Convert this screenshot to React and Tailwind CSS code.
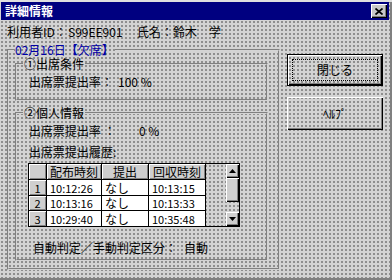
import React from "react";

const dots =
  "bg-[#d3d3d3] bg-[radial-gradient(circle,#8e8e8e_0.8px,transparent_1.1px)] bg-size-[4px_4px]";
const raised =
  "shadow-[inset_1px_1px_0_#fff,inset_-1px_-1px_0_#000,inset_-2px_-2px_0_#808080]";
const cellRaised = "bg-[#cfcfcf] shadow-[inset_1px_1px_0_#fff,inset_-1px_-1px_0_#808080]";
const groove = "border-2 [border-style:groove] border-[#d4d4d4] min-w-0 m-0 p-0";

const rows = [
  { no: "1", out: "10:12:26", sub: "なし", back: "10:13:15" },
  { no: "2", out: "10:13:16", sub: "なし", back: "10:13:33" },
  { no: "3", out: "10:29:40", sub: "なし", back: "10:35:48" },
];

function Arrow({ down }) {
  return (
    <svg width="7" height="4" viewBox="0 0 7 4">
      <polygon points={down ? "0,0 7,0 3.5,4" : "3.5,0 7,4 0,4"} fill="#000" />
    </svg>
  );
}

function HistoryGrid() {
  return (
    <div className="ml-[11px] mt-[4px] flex w-[212px] h-[64px] border border-black">
      <div className="grid grid-cols-[18px_55px_47px_57px_20px] grid-rows-[16px_16px_15px_15px]">
        <div className={`${cellRaised} border-r border-b border-black`} />
        <div className={`${cellRaised} border-r border-b border-black flex items-center justify-center`}>配布時刻</div>
        <div className={`${cellRaised} border-r border-b border-black flex items-center justify-center`}>提出</div>
        <div className={`${cellRaised} border-r border-b border-black flex items-center justify-center`}>回収時刻</div>
        <div />
        {rows.map((r, i) => (
          <React.Fragment key={r.no}>
            <div className={`${cellRaised} border-r border-black ${i < 2 ? "border-b" : ""} flex items-center justify-center text-[11px]`}>
              {r.no}
            </div>
            <div className={`bg-white border-r border-black ${i < 2 ? "border-b" : ""} pl-[3px] flex items-center text-[11px]`}>{r.out}</div>
            <div className={`bg-white border-r border-black ${i < 2 ? "border-b" : ""} pl-[3px] flex items-center`}>{r.sub}</div>
            <div className={`bg-white border-r border-black ${i < 2 ? "border-b" : ""} pl-[3px] flex items-center text-[11px]`}>{r.back}</div>
            <div />
          </React.Fragment>
        ))}
      </div>
      <div className="w-[13px] flex flex-col">
        <div className={`${raised} bg-[#cfcfcf] h-[14px] flex items-center justify-center`}>
          <Arrow />
        </div>
        <div className={`${raised} bg-[#cfcfcf] h-[24px]`} />
        <div className="h-[10px]" />
        <div className={`${raised} bg-[#cfcfcf] h-[14px] flex items-center justify-center`}>
          <Arrow down />
        </div>
      </div>
    </div>
  );
}

export default function App() {
  return (
    <div
      className={`w-[392px] h-[280px] overflow-hidden ${dots} text-black text-[12px] leading-[14px] font-['Noto_Sans_CJK_JP','MS_UI_Gothic',sans-serif] shadow-[inset_0_2px_0_#dfdfdf,inset_-2px_-2px_0_#808080]`}
    >
      <div className="ml-[1px] mt-[2px] mr-[3px] h-[18px] bg-[#000080] flex items-center justify-between pl-[4px] pr-[2px]">
        <span className="text-white font-bold text-[12px]">詳細情報</span>
        <div className={`${raised} bg-[#c8c8c8] w-[16px] h-[14px] flex items-center justify-center`}>
          <svg width="8" height="7" viewBox="0 0 8 7">
            <path d="M0.5 0.5 L7.5 6.5 M7.5 0.5 L0.5 6.5" stroke="#000" strokeWidth="1.7" />
          </svg>
        </div>
      </div>

      <div className="flex pl-[7px] mt-[5px]">
        <span className="w-[61px]">利用者ID：</span>
        <span className="w-[69px]">S99EE901</span>
        <span className="w-[36px]">氏名：</span>
        <span>鈴木　学</span>
      </div>

      <div className="flex pl-[7px] mt-[4px]">
        <fieldset className={`${groove} w-[273px] h-[227px]`}>
          <legend className="ml-[5px] px-[1px] text-[#0000a8] leading-[14px]">02月16日【欠席】</legend>
          <div className="pl-[6px]">
            <fieldset className={`${groove} w-[253px]`}>
              <legend className="ml-[6px] px-[1px] leading-[14px]">①出席条件</legend>
              <div className="flex pl-[12px] pt-[4px] pb-[10px]">
                <span className="w-[89px]">出席票提出率：</span>
                <span>100 %</span>
              </div>
            </fieldset>

            <fieldset className={`${groove} w-[253px] mt-[5px]`}>
              <legend className="ml-[6px] px-[1px] leading-[14px]">②個人情報</legend>
              <div className="pt-[4px] pb-[4px]">
                <div className="flex pl-[12px]">
                  <span className="w-[110px]">出席票提出率 ：</span>
                  <span>0 %</span>
                </div>
                <div className="pl-[12px] mt-[7px]">出席票提出履歴:</div>
                <HistoryGrid />
                <div className="flex pl-[16px] mt-[14px]">
                  <span className="w-[151px]">自動判定／手動判定区分：</span>
                  <span>自動</span>
                </div>
              </div>
            </fieldset>
          </div>
        </fieldset>

        <div className="ml-[7px] mt-[11px] flex flex-col gap-[11px]">
          <div className={`w-[96px] h-[32px] border border-black ${raised} p-[4px]`}>
            <div className="h-full border border-dotted border-black flex items-center justify-center">閉じる</div>
          </div>
          <div className={`w-[96px] h-[33px] ${raised} flex items-center justify-center`}>ﾍﾙﾌﾟ</div>
        </div>
      </div>
    </div>
  );
}
